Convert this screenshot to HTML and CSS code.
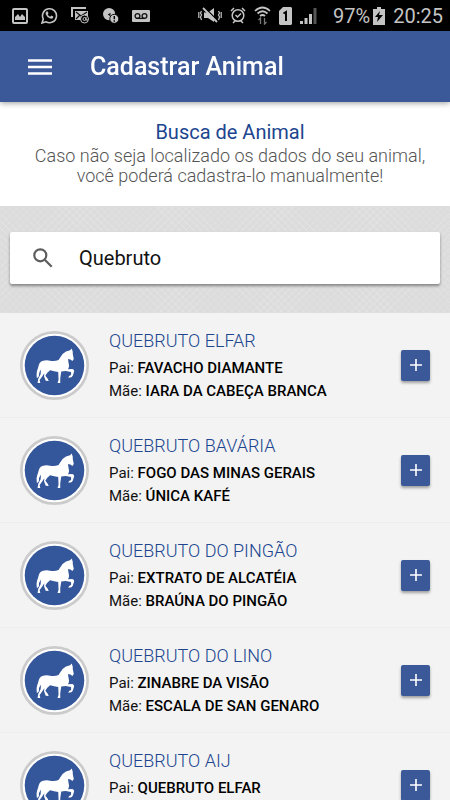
FILE: index.html
```html
<!DOCTYPE html>
<html lang="pt-BR">
<head>
<meta charset="utf-8">
<meta name="viewport" content="width=device-width, initial-scale=1">
<title>Cadastrar Animal</title>
<link rel="stylesheet" href="styles.css">
</head>
<body>
<svg class="defs" aria-hidden="true">
  <symbol id="horse" viewBox="31 36 204 204">
    <circle cx="133" cy="138" r="98" fill="#fff" stroke="#cbcbcb" stroke-width="8"/>
    <circle cx="133" cy="138" r="88" fill="#34569a"/>
    <path fill="#fff" d="M184 88L187 97L187 104L190 119L186 125L180 120L173 119Q174 130 176 138Q176 144 173 149L186 148Q192 150 191 156L187 168L183 173L174 174L176 169L182 166L182 157L166 154Q158 155 153 156L150 176L150 190L142 190L145 180L144 157Q132 155 120 152L111 160L106 168L113 177L116 184L107 183L102 170L103 161L93 176L89 181L91 190L83 190L85 177L92 164L93 150Q86 158 87 170L81 176Q78 158 84 146Q88 127 97 125Q108 121 120 124Q134 126 145 122Q151 112 157 104Q166 95 179 93Z"/>
  </symbol>
</svg>
<div class="app">
  <div class="status">
    <div class="status-icons">
      <svg width="16" height="16" viewBox="0 0 16 16"><rect x="1" y="1" width="14" height="14" rx="1" fill="none" stroke="#c4c4c4" stroke-width="2"/><path d="M3 12V9l3-3 2 3 2-3 3 3v3z" fill="#c4c4c4"/></svg>
      <svg width="17" height="17" viewBox="0 0 17 17"><path d="M1 16l1.300-4A7 7 0 1 1 5 14.800z" fill="none" stroke="#c4c4c4" stroke-width="1.600"/><path d="M5.500 4.500l1-.3 1 2-.8 1.200q1 1.700 2.500 2.300l1.100-1.100 2 1-.3 1.300q-1.200 1.300-3.300.4-3-1.300-4-4-.5-1.600.8-2.800z" fill="#c4c4c4"/></svg>
      <svg width="19" height="17" viewBox="0 0 19 17"><path d="M1 10V1h14" fill="none" stroke="#c4c4c4" stroke-width="2"/><path d="M4 4h13v5h-5l-2 4H4z" fill="#c4c4c4"/><path d="M5 5l5 4 6-4M5 12l4-4" fill="none" stroke="#111" stroke-width="1.300"/><circle cx="13.500" cy="12" r="4" fill="#000" stroke="#c4c4c4"/><circle cx="13.500" cy="12" r="1.500" fill="none" stroke="#c4c4c4"/><path d="M15 10v3h2" fill="none" stroke="#c4c4c4"/></svg>
      <svg width="16" height="16" viewBox="0 0 17 17"><circle cx="6.500" cy="6.500" r="6.500" fill="#c4c4c4"/><path d="M5 7l3-2v4z" fill="#111"/><circle cx="12" cy="11.500" r="4.800" fill="#c4c4c4" stroke="#000"/><path d="M12 8.500v3.500M12 13v1.500" stroke="#000" stroke-width="1.500"/></svg>
      <svg width="18" height="12" viewBox="0 0 18 12"><rect width="18" height="12" rx="1" fill="#c4c4c4"/><g fill="none" stroke="#111" stroke-width="1.300"><circle cx="5.500" cy="6" r="2.400"/><circle cx="12.500" cy="6" r="2.400"/><path d="M5 8.400h8"/></g></svg>
    </div>
    <div class="status-icons status-right">
      <svg width="24" height="17" viewBox="0 0 24 17"><path d="M6 5.500h4l6-4.500v14l-6-4H6z" fill="#c4c4c4"/><path d="M7 1l13 13" stroke="#000" stroke-width="1.500"/><path d="M5 1l14 14" stroke="#c4c4c4" stroke-width="1.800"/><path d="M3.500 4l-1 2 1 2-1 2 1 3M.8 5v6M20.500 4l1 2-1 2 1 2-1 3M23.200 5v6" fill="none" stroke="#c4c4c4" stroke-width="1.200"/></svg>
      <svg width="16" height="17" viewBox="0 0 16 17"><g fill="none" stroke="#c4c4c4" stroke-width="1.500"><circle cx="8" cy="8.500" r="5.800"/><path d="M1 4l3-3M15 4l-3-3M3 16l2-2M13 16l-2-2M5.500 8l2 2L11 6.500"/></g></svg>
      <svg width="17" height="19" viewBox="0 0 17 19"><g fill="none" stroke="#c4c4c4" stroke-width="1.700"><path d="M1 5Q8.500-2 16 5M3.500 7.500q5-4.500 10 0M6 10q2.500-2 5 0"/></g><path d="M6.500 18v-6l-2 2M10.500 12v6l2-2" fill="none" stroke="#777" stroke-width="1.300"/></svg>
      <svg width="13" height="18" viewBox="0 0 13 18"><path d="M4 0h8l1 1v16l-1 1H1l-1-1V4z" fill="#c4c4c4"/><path d="M4.500 6.500L7 5v9" fill="none" stroke="#000" stroke-width="2"/></svg>
      <svg width="17" height="17" viewBox="0 0 17 17"><path d="M0 17v-3h3v3zM4.500 17v-6h3v6zM9 17V7h3v10z" fill="#c4c4c4"/><path d="M13.500 17V1h3v16z" fill="#555"/></svg>
      <span class="battery">97%</span>
      <svg width="12" height="18" viewBox="0 0 12 18"><path d="M0 2h4V0h4v2h4v16H0z" fill="#c4c4c4"/><path d="M7 4l-5 6h3l-1 5 6-7H6z" fill="#000"/></svg>
      <span>20:25</span>
    </div>
  </div>
  <header class="toolbar">
    <button class="menu" type="button" aria-label="Menu"><svg width="24" height="16" viewBox="0 0 24 16"><path d="M0 1.500h24M0 8h24M0 14.500h24" stroke="#fff" stroke-width="2.500"/></svg></button>
    <h1>Cadastrar Animal</h1>
  </header>
  <main class="content">
    <section class="intro">
      <h2>Busca de Animal</h2>
      <p>Caso não seja localizado os dados do seu animal, você poderá cadastra-lo manualmente!</p>
    </section>
    <form class="search">
      <label class="search-box">
        <svg width="20" height="20" viewBox="0 0 20 20" role="img" aria-label="Buscar"><g fill="none" stroke="#5d5d5d" stroke-width="2.200"><circle cx="7.300" cy="7.300" r="6"/><path d="M11.700 11.700l7 7"/></g></svg>
        <input type="text" value="Quebruto">
      </label>
    </form>
    <ul class="animals">
      <li class="animal">
        <svg class="avatar" aria-hidden="true"><use href="#horse"/></svg>
        <div class="details"><h3>QUEBRUTO ELFAR</h3><p>Pai: <strong>FAVACHO DIAMANTE</strong></p><p>Mãe: <strong>IARA DA CABEÇA BRANCA</strong></p></div>
        <button class="add" type="button" aria-label="Adicionar"><svg width="12" height="12" viewBox="0 0 12 12"><path d="M6 0v12M0 6h12" stroke="#fff" stroke-width="1.600"/></svg></button>
      </li>
      <li class="animal">
        <svg class="avatar" aria-hidden="true"><use href="#horse"/></svg>
        <div class="details"><h3>QUEBRUTO BAVÁRIA</h3><p>Pai: <strong>FOGO DAS MINAS GERAIS</strong></p><p>Mãe: <strong>ÚNICA KAFÉ</strong></p></div>
        <button class="add" type="button" aria-label="Adicionar"><svg width="12" height="12" viewBox="0 0 12 12"><path d="M6 0v12M0 6h12" stroke="#fff" stroke-width="1.600"/></svg></button>
      </li>
      <li class="animal">
        <svg class="avatar" aria-hidden="true"><use href="#horse"/></svg>
        <div class="details"><h3>QUEBRUTO DO PINGÃO</h3><p>Pai: <strong>EXTRATO DE ALCATÉIA</strong></p><p>Mãe: <strong>BRAÚNA DO PINGÃO</strong></p></div>
        <button class="add" type="button" aria-label="Adicionar"><svg width="12" height="12" viewBox="0 0 12 12"><path d="M6 0v12M0 6h12" stroke="#fff" stroke-width="1.600"/></svg></button>
      </li>
      <li class="animal">
        <svg class="avatar" aria-hidden="true"><use href="#horse"/></svg>
        <div class="details"><h3>QUEBRUTO DO LINO</h3><p>Pai: <strong>ZINABRE DA VISÃO</strong></p><p>Mãe: <strong>ESCALA DE SAN GENARO</strong></p></div>
        <button class="add" type="button" aria-label="Adicionar"><svg width="12" height="12" viewBox="0 0 12 12"><path d="M6 0v12M0 6h12" stroke="#fff" stroke-width="1.600"/></svg></button>
      </li>
      <li class="animal">
        <svg class="avatar" aria-hidden="true"><use href="#horse"/></svg>
        <div class="details"><h3>QUEBRUTO AIJ</h3><p>Pai: <strong>QUEBRUTO ELFAR</strong></p></div>
        <button class="add" type="button" aria-label="Adicionar"><svg width="12" height="12" viewBox="0 0 12 12"><path d="M6 0v12M0 6h12" stroke="#fff" stroke-width="1.600"/></svg></button>
      </li>
    </ul>
  </main>
</div>
</body>
</html>
```
FILE: styles.css
```css
* { box-sizing: border-box; }
body, h1, h2, h3, p, ul { margin: 0; padding: 0; }
body { font-family: Roboto, "Liberation Sans", sans-serif; background: #f3f3f3; }
button { border: 0; padding: 0; cursor: pointer; }
svg { flex: none; }
.defs { position: absolute; width: 0; height: 0; }

.app { display: flex; flex-direction: column; height: 100vh; }

.status {
  display: flex;
  justify-content: space-between;
  align-items: center;
  padding: 0 7px 0 12px;
  height: 31px;
  flex: none;
  background: #000;
  color: #c4c4c4;
  font-size: 20px;
}
.status-icons { display: flex; align-items: center; gap: 13px; }
.status-right { gap: 8px; }
.status-right .battery { margin: 0 -5px 0 8px; }

.toolbar {
  display: flex;
  align-items: center;
  gap: 38px;
  height: 71px;
  padding: 1px 28px 0;
  flex: none;
  background: #3b5998;
  color: #fff;
  box-shadow: 0 1px 6px rgba(0, 0, 0, 0.4);
  z-index: 1;
}
.toolbar h1 { font-size: 25px; font-weight: 500; line-height: 32px; }
.menu { display: flex; background: none; }

.content { flex: 1; min-height: 0; overflow-y: auto; scrollbar-width: none; }

.intro {
  padding: 18px 20px 20px 30px;
  background: #fff;
  text-align: center;
}
.intro h2 { margin-bottom: 2px; font-size: 20px; font-weight: 400; line-height: 24px; color: #20458f; }
.intro p { font-size: 18px; font-weight: 300; line-height: 20px; color: #555; }

.search {
  padding: 26px 10px 29px;
  background-color: #dcdcdc;
  background-image:
    repeating-linear-gradient(45deg, rgba(255, 255, 255, 0.12) 0 1px, transparent 1px 5px),
    repeating-linear-gradient(-45deg, rgba(255, 255, 255, 0.12) 0 1px, transparent 1px 5px);
}
.search-box {
  display: flex;
  align-items: center;
  gap: 26px;
  height: 52px;
  padding: 0 23px;
  background: #fff;
  border-radius: 2px;
  box-shadow: 0 2px 3px rgba(0, 0, 0, 0.4);
}
.search-box input {
  flex: 1;
  min-width: 0;
  border: 0;
  padding: 0;
  outline: 0;
  background: none;
  font: 400 20px/24px Roboto, "Liberation Sans", sans-serif;
  color: #111;
}

.animals { list-style: none; background: #f3f3f3; }
.animal {
  display: flex;
  align-items: center;
  gap: 20px;
  height: 105px;
  padding: 0 20px;
  border-bottom: 1px solid #ececec;
}
.avatar { width: 69px; height: 69px; }
.details { flex: 1; align-self: flex-start; padding-top: 15px; }
.details h3 { margin-bottom: 4px; font-size: 18px; font-weight: 300; line-height: 25px; color: #20458f; }
.details p { font-size: 15px; line-height: 23px; color: #111; }
.details strong { font-weight: 500; color: #000; }
.add {
  display: flex;
  align-items: center;
  justify-content: center;
  width: 29px;
  height: 31px;
  background: #3b5998;
  border-radius: 2px;
  box-shadow: 0 2px 3px rgba(0, 0, 0, 0.35);
}
```
